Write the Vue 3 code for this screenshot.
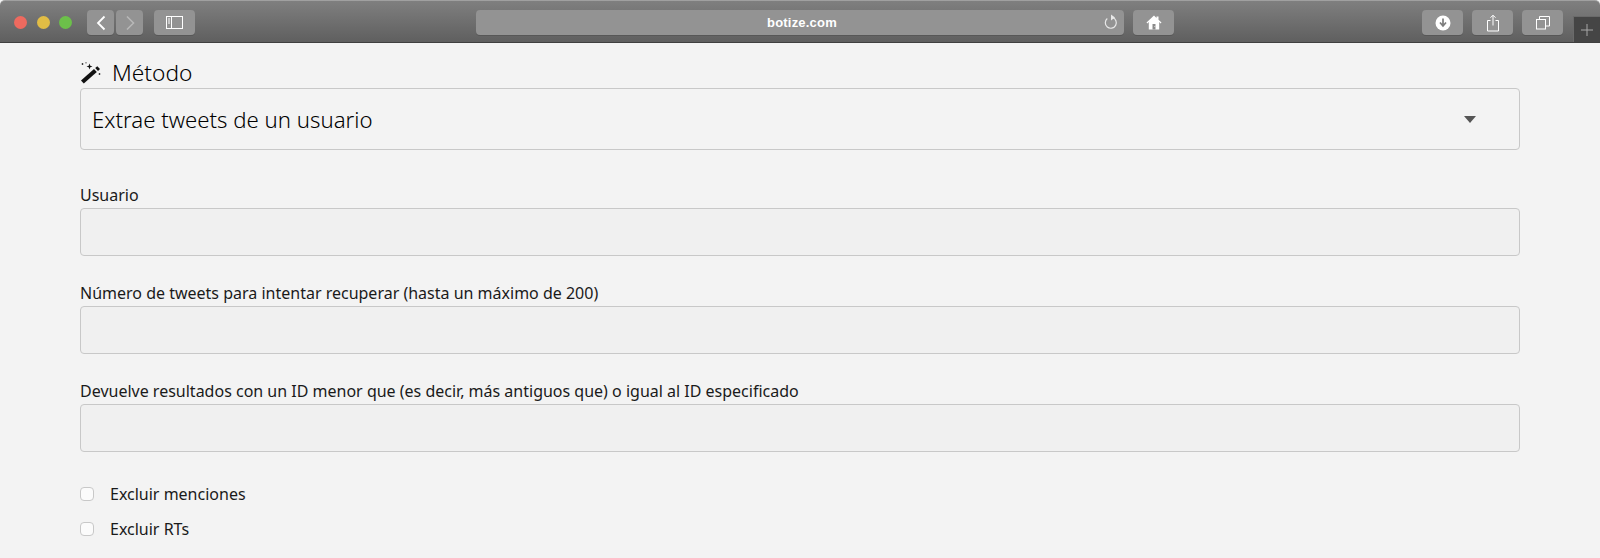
<template>
  <div class="window">
    <header class="toolbar">
      <div class="lights">
        <span class="light red"></span>
        <span class="light yellow"></span>
        <span class="light green"></span>
      </div>
      <div class="nav-group">
        <button class="tool nav">
          <svg viewBox="0 0 14 18" width="14" height="18"><path d="M10.500 2.500 4 9l6.500 6.500" fill="none" stroke="#fff" stroke-width="1.800"/></svg>
        </button>
        <button class="tool nav">
          <svg viewBox="0 0 14 18" width="14" height="18"><path d="M4 2.500 10.500 9 4 15.500" fill="none" stroke="#b8b8b8" stroke-width="1.500"/></svg>
        </button>
      </div>
      <button class="tool sidebar">
        <svg viewBox="0 0 18 14" width="18" height="14">
          <rect x="0.500" y="0.500" width="16" height="12" fill="none" stroke="#fff"/>
          <path d="M5.500 1v11" stroke="#fff"/>
          <path d="M2 3h2M2 5h2M2 7h2" stroke="#fff"/>
        </svg>
      </button>
      <div class="address">
        <span class="url">botize.com</span>
        <svg class="reload" viewBox="0 0 14 16" width="14" height="16">
          <path d="M8.500 3.500A5.500 5.500 0 1 1 3.300 4.500" fill="none" stroke="#e8e8e8" stroke-width="1.200"/>
          <path d="M7 0.500v6l4-3z" fill="#e8e8e8"/>
        </svg>
      </div>
      <button class="tool home">
        <svg viewBox="0 0 16 15" width="16" height="15">
          <path d="M8 0.500 0.500 7.500l.8.900 1.500-1.400v7.500h10.400V7l1.500 1.400.8-.9-3-2.800V1.500h-2v1.400z" fill="#fff"/>
          <path d="M6.500 9h3v5.500h-3z" fill="#8a8a8a"/>
          <path d="M8.400 11.300h.8v.8h-.8z" fill="#fff"/>
        </svg>
      </button>
      <div class="spacer"></div>
      <div class="right-tools">
        <button class="tool small">
          <svg viewBox="0 0 16 16" width="16" height="16">
            <circle cx="8" cy="8" r="7.500" fill="#fff"/>
            <path d="M8 3.500v6M5 7.500 8 11l3-3.500" fill="none" stroke="#7c7c7c" stroke-width="1.700"/>
          </svg>
        </button>
        <button class="tool small">
          <svg viewBox="0 0 14 18" width="14" height="18">
            <path d="M4.500 6.500H1.500v10.500h11V6.500H9.500" fill="none" stroke="#fff"/>
            <path d="M7 11.500V1.500M4.500 3.700 7 1.200l2.500 2.500" fill="none" stroke="#fff"/>
          </svg>
        </button>
        <button class="tool small">
          <svg viewBox="0 0 14 14" width="14" height="14">
            <rect x="0.500" y="3.500" width="9" height="9.500" fill="none" stroke="#fff"/>
            <path d="M3.500 3.500V0.500h10v9.500h-4" fill="none" stroke="#fff"/>
          </svg>
        </button>
      </div>
      <div class="new-tab">
        <svg viewBox="0 0 12 12" width="12" height="12"><path d="M6 0v12M0 6h12" stroke="#a8a8a8"/></svg>
      </div>
    </header>

    <main class="form">
      <h2 class="method-title">
        <svg class="wand" viewBox="0 0 22 22" width="22" height="22">
          <path d="M1 18.500 14 7l2.800 3L3.800 21.500z" fill="#111"/>
          <path d="M15.200 6 17.300 4.200l2.700 2.900-2 1.800z" fill="#111"/>
          <path d="M9.500 1.500l.8 2.200 2.200.8-2.200.8-.8 2.200-.8-2.200-2.200-.8 2.200-.8z" fill="#111"/>
          <path d="M2.500 1v2M1.500 2h2M6 0v1.500M19.500 11v2M18.500 12h2" stroke="#111" stroke-width="0.700"/>
        </svg>
        <span>Método</span>
      </h2>
      <div class="select">
        <span>Extrae tweets de un usuario</span>
        <span class="caret"></span>
      </div>
      <div v-for="field in fields" :key="field" class="field">
        <label>{{ field }}</label>
        <input type="text" />
      </div>
      <div class="checks">
        <label v-for="opt in options" :key="opt" class="check">
          <span class="box"></span>
          <span>{{ opt }}</span>
        </label>
      </div>
    </main>
  </div>
</template>

<script setup>
const fields = [
  'Usuario',
  'Número de tweets para intentar recuperar (hasta un máximo de 200)',
  'Devuelve resultados con un ID menor que (es decir, más antiguos que) o igual al ID especificado'
]
const options = ['Excluir menciones', 'Excluir RTs']
</script>

<style scoped>
.window {
  width: 1600px;
  height: 558px;
  overflow: hidden;
  background: #f3f3f3;
  font-family: "Noto Sans", "Open Sans", sans-serif;
  color: #1a1a1a;
}

.toolbar {
  height: 43px;
  box-sizing: border-box;
  display: flex;
  align-items: flex-start;
  padding: 9px 0 0 14px;
  background: linear-gradient(#7f7f7f, #5f5f5f);
  border-top: 1px solid #a0a0a0;
  border-bottom: 1px solid #3f3f3f;
  border-radius: 5px 5px 0 0;
}

.lights {
  display: flex;
  gap: 9.5px;
  margin-top: 6px;
}

.light {
  width: 13px;
  height: 13px;
  border-radius: 50%;
}
.red { background: #ee6a5f; }
.yellow { background: #e2bd45; }
.green { background: #6cc04a; }

.tool {
  display: flex;
  align-items: center;
  justify-content: center;
  border: 0;
  padding: 0;
  height: 25px;
  background: #939393;
  border-radius: 4px;
  box-shadow: 0 1px 0 rgba(60, 60, 60, 0.3);
}

.nav-group {
  display: flex;
  gap: 2px;
  margin-left: 15px;
}
.nav { width: 27px; }
.sidebar { width: 41px; margin-left: 11px; }

.address {
  width: 648px;
  height: 25px;
  box-sizing: border-box;
  padding-left: 4px;
  margin-left: 281px;
  display: flex;
  align-items: center;
  justify-content: center;
  position: relative;
  background: #939393;
  border-radius: 4px;
  box-shadow: 0 1px 0 rgba(60, 60, 60, 0.3);
}
.url {
  color: #fff;
  font-family: "Liberation Sans", Arial, sans-serif;
  font-size: 13px;
  font-weight: 700;
  letter-spacing: 0.2px;
}
.reload { position: absolute; right: 6px; top: 4px; }

.home { width: 41px; margin-left: 9px; }
.spacer { flex: 1; }
.right-tools {
  display: flex;
  gap: 9px;
  margin-right: 10px;
}
.small { width: 41px; }

.new-tab {
  width: 27px;
  height: 26px;
  margin-top: 6px;
  display: flex;
  align-items: center;
  justify-content: center;
  background: #454545;
  border-left: 1px solid #6a6a6a;
  border-top: 1px solid #6a6a6a;
  box-sizing: border-box;
}

.form {
  padding: 0 80px;
}

.method-title {
  margin: 15px 0 0;
  display: flex;
  align-items: center;
  gap: 10px;
  font-size: 22.7px;
  line-height: 30px;
  font-weight: 300;
  height: 30px;
  color: #000;
}
.wand { flex: none; }

.select {
  height: 62px;
  box-sizing: border-box;
  border: 1px solid #c8c8c8;
  border-radius: 4px;
  padding: 0 43px 0 11px;
  display: flex;
  align-items: center;
  justify-content: space-between;
  font-size: 22.2px;
  font-weight: 300;
  color: #000;
}
.caret {
  width: 0;
  height: 0;
  border-left: 6px solid transparent;
  border-right: 6px solid transparent;
  border-top: 7px solid #555;
}

.field {
  margin-top: 33px;
}
.field + .field { margin-top: 25px; }
.field label {
  display: block;
  font-size: 16px;
  line-height: 25px;
  color: #1a1a1a;
}
.field input {
  display: block;
  width: 100%;
  height: 48px;
  box-sizing: border-box;
  border: 1px solid #c8c8c8;
  border-radius: 4px;
  background: #f0f0f0;
}

.checks {
  margin-top: 30px;
  display: flex;
  flex-direction: column;
  gap: 11px;
}
.check {
  display: flex;
  align-items: center;
  gap: 16px;
  font-size: 16px;
  line-height: 24px;
}
.box {
  width: 14px;
  height: 14px;
  box-sizing: border-box;
  background: #fbfbfb;
  border: 1px solid #c8c8c8;
  border-radius: 4px;
}
</style>
